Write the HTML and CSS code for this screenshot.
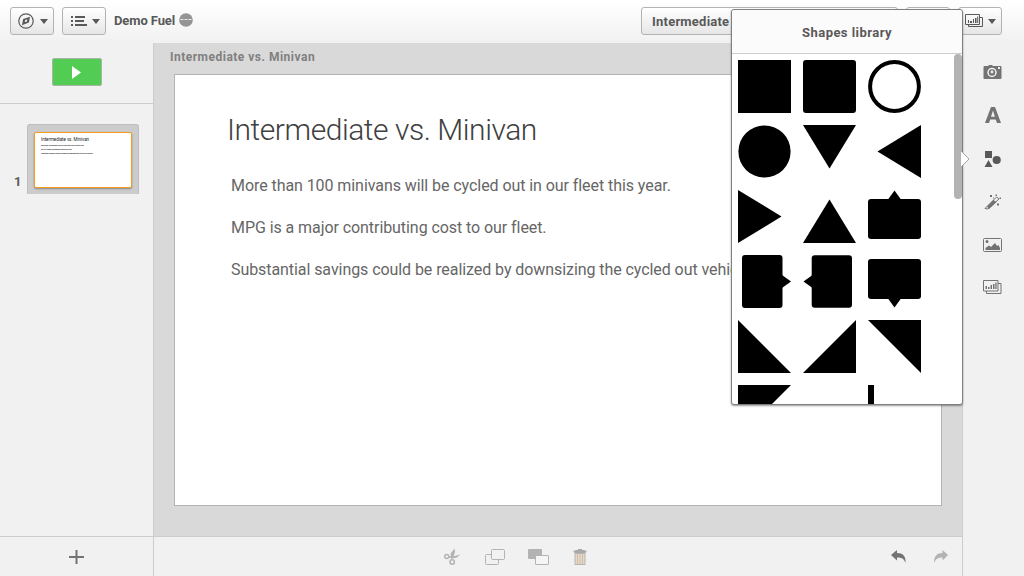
FILE: index.html
```html
<!DOCTYPE html>
<html lang="en">
<head>
<meta charset="utf-8">
<title>Demo Fuel</title>
<link rel="stylesheet" href="styles.css">
</head>
<body>
<div class="app">
  <header class="topbar">
    <button class="btn">
      <svg width="16" height="16" viewBox="0 0 16 16"><circle cx="8" cy="8" r="7.2" fill="none" stroke="#595959" stroke-width="1.2"/><path d="M4 12.2 5.1 6 12 3.8 10.9 9.5Z" fill="#595959"/><path d="M6.8 9.3 7.2 7 9.3 6.2 8.9 8.4Z" fill="#eee"/></svg>
      <span class="caret"></span>
    </button>
    <button class="btn">
      <svg width="17" height="12" viewBox="0 0 17 12" fill="#595959"><path d="M1 1h2v2H1zM1 5h2v2H1zM1 9h2v2H1zM5 1h10v2H5zM5 5h9v2H5zM5 9h12v2H5z"/></svg>
      <span class="caret"></span>
    </button>
    <span class="app-name">Demo Fuel</span>
    <svg class="app-info" width="14" height="14" viewBox="0 0 14 14"><circle cx="7" cy="7" r="6.8" fill="#949494"/><path d="M1.5 6.5h3M5.5 6.5h3M9.500 6.5h3" stroke="#ededed"/></svg>
    <div class="btn-group">
      <button class="btn btn-sheet">Intermediate vs. Minivan</button>
      <button class="btn"></button>
      <button class="btn btn-story">
        <svg width="19" height="16" viewBox="0 0 19 16"><path d="M.5 1.500h14v10H.5zM14.500 4.500h3v9h-14v-2" fill="none" stroke="#595959"/><path d="M3 7h1v3H3zM5 8h2v2H5zM8 6h1v4H8zM10 5h1.500v5H10zM12.200 3.500h1V10h-1z" fill="#595959"/></svg>
        <span class="caret"></span>
      </button>
    </div>
  </header>

  <aside class="timeline">
    <div class="play-row"><button class="play"><svg width="9" height="13" viewBox="0 0 9 13"><path d="M0 0 9 6.500 0 13Z" fill="#fff"/></svg></button></div>
    <div class="slide-item">
      <span class="slide-number">1</span>
      <div class="thumb">
        <div class="thumb-page">
          <div class="thumb-title">Intermediate vs. Minivan</div>
          <div class="thumb-line">More than 100 minivans will be cycled out in our fleet this year.</div>
          <div class="thumb-line">MPG is a major contributing cost to our fleet.</div>
          <div class="thumb-line">Substantial savings could be realized by downsizing the cycled out vehicles.</div>
        </div>
      </div>
    </div>
    <div class="add-row"><svg width="15" height="14" viewBox="0 0 15 14"><path d="M0 6h15v2H0zM6.500 0h2v14h-2z" fill="#737373"/></svg></div>
  </aside>

  <main class="stage">
    <div class="stage-title">Intermediate vs. Minivan</div>
    <section class="slide">
      <h1 class="slide-heading">Intermediate vs. Minivan</h1>
      <p class="slide-text t1">More than 100 minivans will be cycled out in our fleet this year.</p>
      <p class="slide-text">MPG is a major contributing cost to our fleet.</p>
      <p class="slide-text">Substantial savings could be realized by downsizing the cycled out vehicles.</p>
    </section>
  </main>

  <footer class="tools">
    <div class="tool-group">
      <svg width="17" height="17" viewBox="0 0 17 17" fill="none" stroke="#b3b3b3"><circle cx="2.700" cy="8.500" r="2" stroke-width="1.500"/><circle cx="8.200" cy="14" r="2.200" stroke-width="1.500"/><path d="M5 8 9 8.500 16 6.500 13 9.500 8.500 10.500 5 9.500ZM7.500 11.500 6.500 5.500 10.500 .5 11 4 9.500 8.500Z" fill="#b3b3b3" stroke="none"/></svg>
      <svg width="20" height="17" viewBox="0 0 20 17" fill="#f1f1f1" stroke="#b3b3b3"><rect x=".5" y="6.500" width="13" height="10" rx="1"/><rect x="6.500" y="1.500" width="13" height="10" rx="1"/></svg>
      <svg width="21" height="17" viewBox="0 0 21 17"><path d="M1 1h12q1 0 1 1v9H1q-1 0-1-1V2q0-1 1-1Z" fill="#b3b3b3"/><rect x="7.500" y="7.500" width="13" height="9" rx=".5" fill="#f5f5f5" stroke="#b3b3b3"/></svg>
      <svg width="14" height="17" viewBox="0 0 14 17"><path d="M.5 4V3L3 2h2V1h4v1h2l2.500 1v1l-1.500 1H2Z" fill="#a9a9a9"/><rect x="2" y="5.500" width="10" height="11" fill="#ead8c4" stroke="#b8b4b0"/><path d="M4.500 6v10M7 6v10M9.500 6v10" stroke="#c9bfb4"/></svg>
    </div>
    <div class="history">
      <svg width="16" height="14" viewBox="0 0 16 14"><path d="M0 5 6 0V3C12 3 15 6 14.500 13 13 8.500 10.500 7.500 6 7.500V10.500Z" fill="#737373"/></svg>
      <svg width="16" height="14" viewBox="0 0 16 14"><path d="M15 5 9.500 0V3C4 3 1 6 1 13 3 8.500 5.500 7.500 9.500 7.500V10.500Z" fill="#b3b3b3"/></svg>
    </div>
  </footer>

  <nav class="rail">
    <svg width="19" height="14" viewBox="0 0 19 14"><path d="M1.500 1H5l1-1h3l1 1h7.500q1 0 1 1v11q0 1-1 1h-16q-1 0-1-1V2q0-1 1-1Z" fill="#737373"/><circle cx="9" cy="7.500" r="4" fill="#737373" stroke="#f1f1f1" stroke-width="1.500"/><circle cx="9" cy="7" r="1.400" fill="#f1f1f1"/><path d="M15 2h2v2h-2z" fill="#f1f1f1"/></svg>
    <svg width="16" height="16" viewBox="0 0 16 16"><path d="M0 16 6 0h4l6 16h-4l-1.300-3.600H5.200L4 16ZM6 9.700h3.900L8 3.500Z" fill="#737373" fill-rule="evenodd"/></svg>
    <svg width="17" height="16" viewBox="0 0 17 16" fill="#595959"><path d="M1 0h7v7H1zM4.500 9 8.500 16H.5Z"/><circle cx="12.700" cy="9" r="4.100"/></svg>
    <svg width="18" height="16" viewBox="0 0 18 16"><path d="M1 14.500 12.500 3l2.500 2L4 15Z" fill="#f1f1f1" stroke="#737373"/><path d="m3 12.500 6.500-6.500 3 2L5 15Z" fill="#737373"/><path d="M6 1h2v2H6zM11.500.500h1.500V2h-1.500zM15.500 3.500H17V5h-1.500zM13 9.500h2v2h-2zM9 3.500h1v1H9z" fill="#737373"/></svg>
    <svg width="19" height="14" viewBox="0 0 19 14"><rect x=".5" y=".5" width="18" height="13" rx="1" fill="none" stroke="#737373"/><circle cx="4" cy="3.500" r="1.500" fill="#737373"/><path d="M2.500 12V10L6 7.500 8 9l4-4 2 3 1.500-1 1.500 3v2Z" fill="#737373"/></svg>
    <svg width="19" height="15" viewBox="0 0 19 15"><path d="M.5.5h14.500v10.500H.5zM15 3.500h3v10H3.500V11" fill="none" stroke="#737373"/><path d="M2.500 6H4v3H2.500zM5 7h1.500v2H5zM7.500 5H9v4H7.500zM10 4h1.500v5H10zM12.300 2.500h1.300V9h-1.300z" fill="#737373"/></svg>
  </nav>

  <section class="popup">
    <h2 class="popup-title">Shapes library</h2>
    <div class="shapes">
      <svg class="shape" viewBox="0 0 53 53"><path d="M0 0h53v53H0z"/></svg>
      <svg class="shape" viewBox="0 0 53 53"><rect width="53" height="53" rx="3"/></svg>
      <svg class="shape" viewBox="0 0 53 53"><circle cx="26.500" cy="26.500" r="24.400" fill="none" stroke="#000" stroke-width="4"/></svg>
      <svg class="shape" viewBox="0 0 53 53"><circle cx="26.500" cy="26.500" r="26.100"/></svg>
      <svg class="shape" viewBox="0 0 53 53"><path d="M0 0h53L26.500 43.500Z"/></svg>
      <svg class="shape" viewBox="0 0 53 53"><path d="M53 0v53L9.500 26.500Z"/></svg>
      <svg class="shape" viewBox="0 0 53 53"><path d="M0 0v53L43.500 26.500Z"/></svg>
      <svg class="shape" viewBox="0 0 53 53"><path d="M0 53h53L26.500 9.500Z"/></svg>
      <svg class="shape" viewBox="0 0 53 53"><rect y="9" width="53" height="40" rx="3"/><path d="m20 9.500 6.500-9 6.500 9Z"/></svg>
      <svg class="shape" viewBox="0 0 53 53"><rect x="4" width="40.500" height="53" rx="3"/><path d="m44 20 9 6.500-9 6.500Z"/></svg>
      <svg class="shape" viewBox="0 0 53 53"><rect x="8.700" y=".3" width="40.300" height="52.500" rx="3"/><path d="m9.500 20-9 6.500 9 6.500Z"/></svg>
      <svg class="shape" viewBox="0 0 53 53"><rect y="4" width="53" height="40" rx="3"/><path d="m20 43.500 6.500 9 6.500-9Z"/></svg>
      <svg class="shape" viewBox="0 0 53 53"><path d="M0 0v53h53Z"/></svg>
      <svg class="shape" viewBox="0 0 53 53"><path d="M53 0v53H0Z"/></svg>
      <svg class="shape" viewBox="0 0 53 53"><path d="M0 0h53v53Z"/></svg>
      <svg class="shape" viewBox="0 0 53 53"><path d="M0 0h53L0 53Z"/></svg>
      <span class="shape"></span>
      <svg class="shape" viewBox="0 0 53 53"><path d="M0 0h6v53H0z"/></svg>
    </div>
    <span class="scroll-thumb"></span>
    <svg class="pointer" width="9" height="18" viewBox="0 0 9 18"><path d="M0 1 8 9 0 17" fill="#fff" stroke="#a6a6a6"/></svg>
  </section>
</div>
</body>
</html>
```
FILE: styles.css
```css
* { box-sizing: border-box; }
body { margin: 0; font-family: Roboto, "Open Sans", sans-serif; color: #595959; background: #f1f1f1; }
svg { display: block; flex: none; }
.app { position: relative; width: 1024px; height: 576px; overflow: hidden; display: grid; grid-template: 43px 493px 40px / 153px 810px 61px; }
.topbar { grid-column: 1 / 4; display: flex; align-items: flex-start; padding: 7px 22px 0 10px; background: linear-gradient(#fff, #f1f1f1); }
.btn { flex: none; display: flex; align-items: center; justify-content: space-between; width: 44px; height: 28px; margin: 0 8px 0 0; padding: 0 5px 0 7px; border: 1px solid #b3b3b3; border-radius: 3px; background: linear-gradient(#fff, #e6e6e6); font: bold 13px Roboto, sans-serif; color: #595959; white-space: nowrap; }
.caret { border: 4px solid transparent; border-top: 5px solid #595959; border-bottom: 0; margin-top: 1px; }
.app-name { font-weight: bold; font-size: 13px; line-height: 28px; letter-spacing: -.1px; width: 61px; white-space: nowrap; }
.app-info { margin: 6px 0 0 4px; }
.btn-group { display: flex; gap: 8px; margin-left: auto; }
.btn-group .btn { margin: 0; }
.btn-group .btn-sheet { width: 257px; padding-left: 10px; letter-spacing: .22px; }
.btn-group .btn-story { padding-left: 6px; }
.timeline { grid-row: 2 / 4; display: flex; flex-direction: column; }
.play-row { height: 61px; padding: 15px 0 0 52px; border-bottom: 1px solid #ccc; }
.play { display: flex; align-items: center; justify-content: center; width: 50px; height: 28px; padding: 0 2px 0 0; border: 1px solid #a9b5a9; border-radius: 2px; background: #52cc52; }
.slide-item { display: flex; padding: 20px 0 0 14px; flex: 1; }
.slide-number { width: 13px; padding-top: 50px; font-weight: bold; font-size: 13px; line-height: 15px; }
.thumb { width: 112px; height: 70px; padding: 7px 6px; background: #ccc; border: solid #bfbfbf; border-width: 1px 1px 0; border-radius: 3px 3px 0 0; }
.thumb-page { width: 98px; height: 56px; padding: 3px 0 0 6px; border: 1px solid #f7991c; border-radius: 2px; background: #fff; box-shadow: 0 1px 2px #888; overflow: hidden; white-space: nowrap; color: #222; }
.thumb-title { font-size: 4.5px; line-height: 7px; letter-spacing: -.04px; }
.thumb-line { font-size: 1.7px; line-height: 4px; font-weight: bold; letter-spacing: -.07px; }
.add-row { height: 40px; border-top: 1px solid #ccc; padding: 13px 0 0 69px; }
.stage { background: #d9d9d9; border: solid #ccc; border-width: 0 1px; padding: 0 20px; }
.stage-title { height: 31px; margin-left: -4px; font-weight: bold; font-size: 12px; line-height: 28px; color: #808080; letter-spacing: .49px; }
.slide { width: 768px; height: 432px; background: #fff; border: 1px solid #b3b3b3; overflow: hidden; white-space: nowrap; }
.slide-heading { margin: 35px 0 0 52px; font-weight: 300; font-size: 30px; line-height: 40px; letter-spacing: -.45px; color: #404040; }
.slide-text { margin: 0 0 0 56px; font-weight: 400; font-size: 16px; line-height: 42px; letter-spacing: -.07px; color: #666; }
.t1 { margin-top: 15px; }
.tools { grid-column: 2; display: flex; border: 1px solid #ccc; border-bottom: 0; padding-left: 290px; }
.tool-group { display: flex; gap: 23px; padding-top: 11px; }
.tool-group svg:nth-child(2) { margin-left: 1px; }
.tool-group svg:nth-child(4) { margin-left: 1px; }
.history { display: flex; gap: 26px; margin-left: auto; padding: 13px 13px 0 0; }
.rail { grid-row: 2 / 4; grid-column: 3; display: flex; flex-direction: column; align-items: center; gap: 28px; padding: 22px 2px 0 0; }
.rail svg:nth-child(3) { margin-left: -1px; }
.rail svg:nth-child(4) { margin-top: -1px; }
.popup { position: absolute; left: 731px; top: 9px; width: 232px; height: 396px; background: #fff; border: 1px solid #808080; border-radius: 3px; box-shadow: 0 1px 2px rgba(0,0,0,.4); }
.popup-title { height: 44px; margin: 0; border-bottom: 1px solid #ccc; border-radius: 3px 3px 0 0; background: #fbfbfb; text-align: center; font-size: 13px; line-height: 45px; letter-spacing: .45px; }
.shapes { display: grid; grid-template-columns: repeat(3, 53px); grid-auto-rows: 53px; gap: 12px; height: 350px; padding: 6px; overflow: hidden; }
.shape { width: 53px; height: 53px; }
.scroll-thumb { position: absolute; right: 0; top: 44px; width: 8px; height: 145px; border-radius: 4px; background: #b3b3b3; }
.pointer { position: absolute; left: 229px; top: 140px; }
```
